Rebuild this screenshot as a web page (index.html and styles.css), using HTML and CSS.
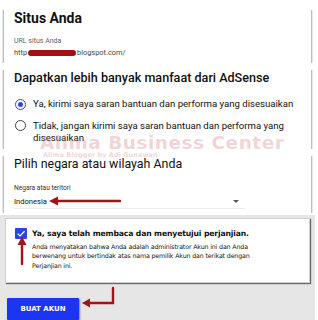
FILE: index.html
```html
<!DOCTYPE html>
<html>
<head>
<meta charset="utf-8">
<link rel="stylesheet" href="styles.css">
</head>
<body>
<div class="page">
  <section class="card c1">
    <h2 class="h-bold">Situs Anda</h2>
    <div class="label">URL situs Anda</div>
    <div class="url">http<span class="redact"></span>blogspot.com/</div>
  </section>

  <section class="card c2">
    <h2 class="h-med">Dapatkan lebih banyak manfaat dari AdSense</h2>
    <div class="radio-row r1">
      <span class="radio on"></span>
      <span class="radio-text">Ya, kirimi saya saran bantuan dan performa yang disesuaikan</span>
    </div>
    <div class="radio-row r2">
      <span class="radio"></span>
      <span class="radio-text">Tidak, jangan kirimi saya saran bantuan dan performa yang disesuaikan</span>
    </div>
  </section>

  <section class="card c3">
    <h2 class="h-reg">Pilih negara atau wilayah Anda</h2>
    <div class="label small">Negara atau teritori</div>
    <div class="select">
      <span>Indonesia</span>
      <span class="caret"></span>
    </div>
  </section>

  <div class="bottom">
    <section class="agree">
      <div class="agree-row">
        <span class="check"><svg width="12" height="11" viewBox="0 0 12 11"><path d="M2.6 5.6 L5 7.9 L9.6 3.2" fill="none" stroke="#fff" stroke-width="1.3"/></svg></span>
        <div class="agree-text">
          <div class="agree-title">Ya, saya telah membaca dan menyetujui perjanjian.</div>
          <p class="agree-para">Anda menyatakan bahwa Anda adalah administrator Akun ini dan Anda berwenang untuk bertindak atas nama pemilik Akun dan terikat dengan Perjanjian ini.</p>
        </div>
      </div>
    </section>
    <div class="btn-row">
      <button class="btn">BUAT AKUN</button>
    </div>
  </div>

  <div class="watermark">
    <div class="wm-big">Alima Business Center</div>
    <div class="wm-small">Alima Blogger by Adi Gunawan</div>
  </div>

  <svg class="arrows" width="318" height="320" viewBox="0 0 318 320">
    <g fill="none" stroke="#a2141a" stroke-width="2.4" stroke-linecap="round">
      <path d="M120 201 L56 201"/>
      <path d="M22 264 L22 243"/>
      <path d="M113 288 L113 303 L88 303"/>
    </g>
    <g fill="#a2141a">
      <path d="M49 201 L58 196.5 L58 205.5 Z"/>
      <path d="M22 236.5 L17.5 245 L26.5 245 Z"/>
      <path d="M82 303 L90 298.5 L90 307.5 Z"/>
    </g>
  </svg>
</div>
</body>
</html>
```

FILE: styles.css
```css
* { box-sizing: border-box; }
html, body { margin: 0; padding: 0; background: #fff; }
body { width: 318px; height: 320px; overflow: hidden; font-family: Roboto, "Liberation Sans", sans-serif; color: #202124; }
.page { position: relative; width: 318px; height: 320px; padding-top: 7px; }

.card {
  margin-left: 3px;
  width: 309px;
  border-left: 1px solid #bdbdbd;
  border-right: 1px solid #bdbdbd;
  box-shadow: -1px 0 0 #e8e8e8, 1px 0 0 #e8e8e8;
  padding: 0 10px;
  background: #fff;
}
.c1 { height: 53px; }
.c2 { height: 79px; margin-top: 7px; }
.c3 { height: 57px; margin-top: 7px; }

h2 { margin: 0; font-weight: 400; color: #111; }
.h-bold { font-size: 14px; font-weight: 700; line-height: 16px; margin-top: 3px; }
.h-med { font-size: 12.6px; font-weight: 500; line-height: 16px; margin-top: 3px; }
.h-reg { font-size: 12.4px; font-weight: 400; line-height: 16px; margin-top: 2px; }

.label { font-size: 7px; line-height: 10px; color: #5f6368; margin-top: 10px; }
.label.small { font-size: 6.6px; margin-top: 11px; color: #333; }
.url { font-size: 7.4px; line-height: 10px; margin-top: 2px; color: #444; display: flex; align-items: center; }
.redact { display: inline-block; width: 48px; height: 6px; border-radius: 3px; background: #a80d0d; margin: 0 1px; }

.radio-row { display: flex; align-items: flex-start; }
.r1 { margin-top: 12px; }
.r2 { margin-top: 9.5px; }
.radio {
  flex: none; width: 11px; height: 11px; border-radius: 50%;
  border: 1.5px solid #444; margin-left: 1px; margin-top: 0.5px; margin-right: 7px;
  display: flex; align-items: center; justify-content: center;
}
.radio.on { border-color: #2a47e0; }
.radio.on::after { content: ""; width: 5px; height: 5px; border-radius: 50%; background: #2a47e0; }
.radio-text { font-size: 9.6px; line-height: 12px; color: #111; width: 262px; }

.select {
  margin-top: 2.5px; width: 231px; height: 13px;
  display: flex; justify-content: space-between; align-items: center;
  font-size: 7.6px; line-height: 12px; color: #111;
  border-bottom: 1px solid #ececec;
  padding-right: 6px;
}
.caret { width: 0; height: 0; border-left: 3px solid transparent; border-right: 3px solid transparent; border-top: 3px solid #555; }

.bottom {
  margin-top: 2px;
  width: 315px; height: 108px;
  background: #e6e6e6;
  padding-top: 3px;
}
.agree {
  margin-left: 5px; width: 305px; height: 65px;
  background: #fff;
  border: 1px solid #d0d0d0;
  box-shadow: 1px 1px 1px rgba(0,0,0,0.55);
  padding: 9px 8px 0 9px;
  font-family: "DejaVu Sans", Verdana, sans-serif;
}
.agree-row { display: flex; align-items: flex-start; }
.check {
  flex: none; width: 12px; height: 11px; background: #2a45e0; border-radius: 1px;
  margin-right: 5px; margin-top: 0px; display: flex;
}
.agree-title { font-size: 7.7px; font-weight: 700; line-height: 11px; color: #111; margin-top: -0.5px; letter-spacing: -0.15px; }
.agree-para { margin: 3px 0 0; font-size: 6.3px; line-height: 9.5px; color: #111; width: 246px; letter-spacing: -0.15px; }

.btn-row { padding: 13px 0 0 7px; }
.btn {
  width: 72px; height: 22px; border: 0; border-radius: 1px;
  background: #1c35f2; color: #fff;
  font-family: "DejaVu Sans", Verdana, sans-serif; font-weight: 700; font-size: 7px;
  box-shadow: 1px 1px 2px rgba(0,0,0,0.45);
  padding: 0;
}

.watermark { position: absolute; left: 40px; top: 134px; pointer-events: none; }
.wm-big { font-family: "DejaVu Sans", Verdana, sans-serif; font-weight: 700; font-size: 18.5px; line-height: 17px; color: rgba(215, 120, 130, 0.32); letter-spacing: 0.5px; }
.wm-small { font-family: "DejaVu Sans", Verdana, sans-serif; font-weight: 700; font-size: 6.6px; line-height: 9px; color: rgba(215, 120, 130, 0.32); margin-left: 3px; }

.arrows { position: absolute; left: 0; top: 0; pointer-events: none; }
```
